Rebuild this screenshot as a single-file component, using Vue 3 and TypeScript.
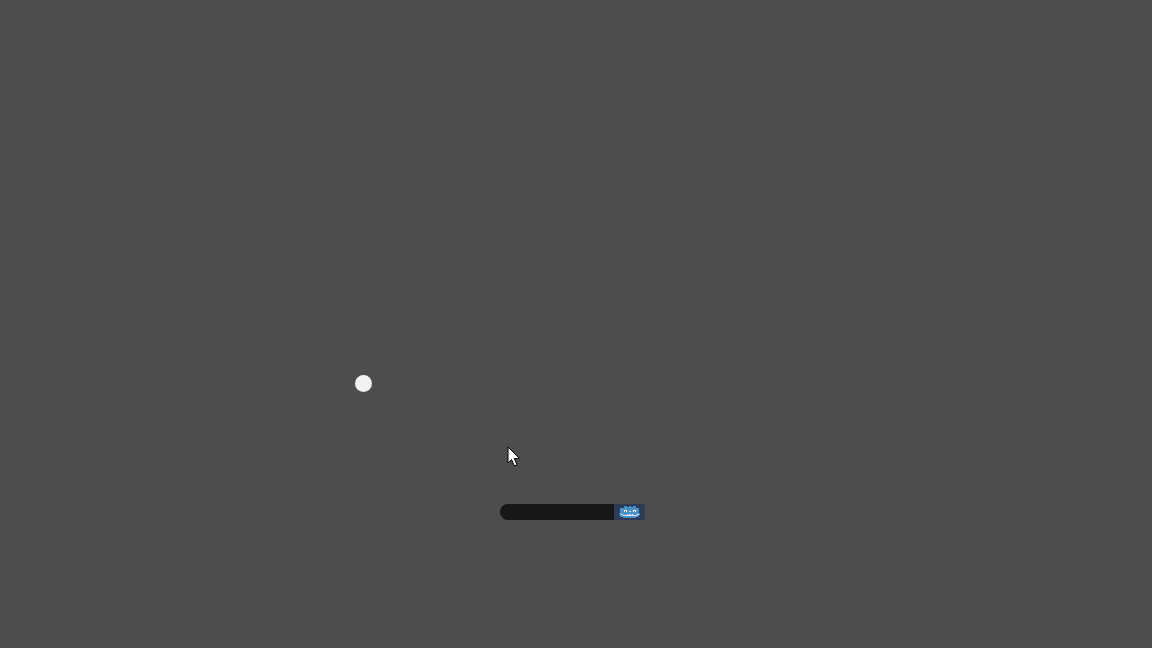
<script setup lang="ts">
const title = 'Game canvas'
</script>

<template>
  <main class="canvas" :aria-label="title">
    <div class="ball"></div>
    <svg class="cursor" width="14" height="21" viewBox="0 0 14 21">
      <path d="M1 1 V17 L4.6 13.6 L7.4 20 L10 18.8 L7.3 12.6 L12.4 12.4 Z" fill="#fff" stroke="#000" stroke-width="1" />
    </svg>
    <div class="bar">
      <div class="track"></div>
      <div class="logo-button">
        <svg width="22" height="12" viewBox="0 0 22 12" shape-rendering="crispEdges">
          <path d="M5 0h3v1h2V0h2v1h2V0h3v2h3v5h1v2h-1v2h-3v1H4v-1H1V9H0V7h1V2h4z" fill="#4a90c8" />
          <path d="M5 4h3v2H5zM14 4h3v2h-3z" fill="#fff" />
          <path d="M6 5h1v1H6zM15 5h1v1h-1z" fill="#33435c" />
          <path d="M10 5h2v1h-2z" fill="#cfe0ee" />
          <path d="M2 8h2v1h4V8h1v1h1V8h2v1h1V8h1v1h4V8h2v1h-2v1H4V9H2z" fill="#dfeaf3" />
        </svg>
      </div>
    </div>
  </main>
</template>

<style scoped>
.canvas {
  position: relative;
  width: 1152px;
  height: 648px;
  overflow: hidden;
  background: #4d4d4d;
}

.ball {
  position: absolute;
  left: 355px;
  top: 374.5px;
  width: 17px;
  height: 17px;
  border-radius: 50%;
  background: #f2f2f2;
}

.cursor {
  position: absolute;
  left: 507px;
  top: 446px;
}

.bar {
  position: absolute;
  left: 500px;
  top: 504px;
  display: flex;
  width: 145px;
  height: 16px;
}

.track {
  flex: 1;
  border-radius: 8px 0 0 8px;
  background: #171717;
}

.logo-button {
  display: flex;
  align-items: center;
  justify-content: center;
  width: 31px;
  border-radius: 0 2px 2px 0;
  background: #2c3a56;
}
</style>
